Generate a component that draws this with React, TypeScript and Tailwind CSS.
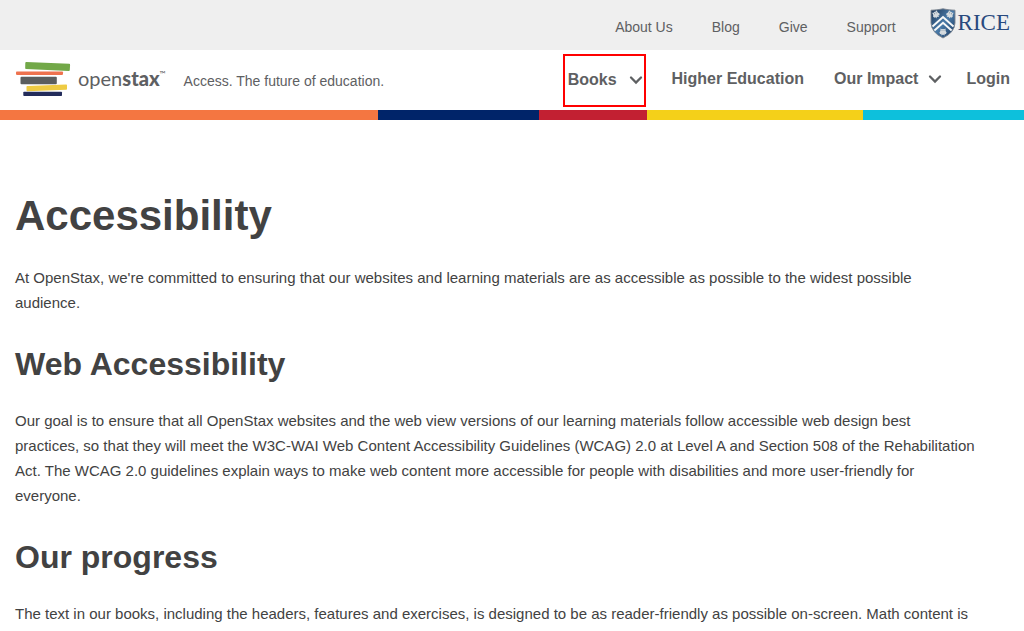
import React from "react";

const topLinks = ["About Us", "Blog", "Give", "Support"];

function Chevron() {
  return (
    <svg viewBox="0 0 14 10" className="h-[10px] w-[14px]" fill="none" stroke="currentColor" strokeWidth="2.3" strokeLinecap="round" aria-hidden="true">
      <path d="M2 2.5 L7 7.5 L12 2.5" />
    </svg>
  );
}

function BooksMark() {
  return (
    <svg viewBox="0 0 56 36" className="h-[36px] w-[56px]" aria-hidden="true">
      <path d="M10.2 0 L53.2 1.7 Q54.2 1.8 54.1 2.8 L53.8 8.1 Q53.7 9.1 52.7 9 L10 7 Q9.1 6.9 9.2 6 L9.3 0.9 Q9.4 0 10.2 0Z" fill="#72a848" />
      <rect x="0" y="9.5" width="47" height="3.4" rx="0.8" fill="#ee724e" />
      <rect x="4.5" y="14.7" width="36.3" height="7.5" rx="1" fill="#5b5e5e" />
      <path d="M11.3 24 L50.3 22.6 Q51 22.6 51 23.4 V27 Q51 27.8 50.2 27.8 L11.4 29.2 Q10.5 29.2 10.5 28.3 V24.8 Q10.5 24 11.3 24Z" fill="#eecb43" />
      <rect x="7.3" y="29.8" width="38.7" height="4.3" rx="0.8" fill="#232c5b" />
    </svg>
  );
}

function Owl({ x, y, turn }: { x: number; y: number; turn: number }) {
  return (
    <g transform={`translate(${x} ${y}) rotate(${turn})`} fill="#d5dbdf">
      <path d="M-2.5 -3.5 L-1.2 -2.8 L0 -3.1 L1.2 -2.8 L2.5 -3.5 L2.6 -1 L3.6 0.6 L2.8 2.2 L1.7 1.7 L1.6 3.5 L0.5 2.7 L-0.5 2.7 L-1.6 3.5 L-1.7 1.7 L-2.8 2.2 L-3.6 0.6 L-2.6 -1Z" />
      <circle cx="-1" cy="-1.4" r="0.45" fill="#496078" />
      <circle cx="1" cy="-1.4" r="0.45" fill="#496078" />
    </g>
  );
}

function RiceShield() {
  return (
    <svg viewBox="0 0 26 31" className="h-[31px] w-[26px]" aria-hidden="true">
      <defs>
        <linearGradient id="shield" x1="0" y1="0" x2="1" y2="1">
          <stop offset="0" stopColor="#1d3656" />
          <stop offset="0.5" stopColor="#4a7ba9" />
          <stop offset="1" stopColor="#1b365b" />
        </linearGradient>
      </defs>
      <path d="M1 2.2 Q7 2.2 13 0.8 Q19 2.2 25 2.2 V15 Q24.6 24.5 13 30 Q1.4 24.5 1 15Z" fill="url(#shield)" stroke="#7d858e" strokeWidth="0.9" />
      <path d="M2.5 18.5 L13 9 L23.5 18.5 M4.4 22.6 L13 14.8 L21.6 22.6" fill="none" stroke="#f7f8f8" strokeWidth="2" />
      <Owl x={6} y={6.6} turn={-28} />
      <Owl x={19.8} y={6.6} turn={28} />
      <Owl x={13} y={24} turn={0} />
    </svg>
  );
}

function Section({ title, children }: { title: string; children: React.ReactNode }) {
  return (
    <section className="pt-[26px]">
      <h2 className="text-[32px] leading-[46px] font-bold">{title}</h2>
      <p className="pt-[21px]">{children}</p>
    </section>
  );
}

export default function App() {
  return (
    <div className="bg-white font-['Liberation_Sans',Arial,sans-serif] text-[#424242]">
      <header className="text-[#5e6062]">
        <div className="flex h-[50px] items-center justify-end bg-[#efefef] pr-[14px]">
          <nav aria-label="Secondary" className="flex gap-[39px] pt-1 text-sm">
            {topLinks.map((label) => (
              <a key={label} href="#">{label}</a>
            ))}
          </nav>
          <a href="#" aria-label="Rice University" className="ml-[34px] flex items-center gap-[2px] pb-1">
            <RiceShield />
            <span className="font-['Liberation_Serif',serif] text-[23px] leading-7 text-[#294a7e]">RICE</span>
          </a>
        </div>

        <div className="flex h-[60px] items-center justify-between pr-[14px] pl-4">
          <div className="flex items-center">
            <a href="#" className="flex items-center gap-[6px]">
              <BooksMark />
              <span className="flex items-start pb-1 font-['Lato',sans-serif] text-[20px] leading-6">
                <span>open<b className="font-black">stax</b></span>
                <span className="text-[8px] leading-4">™</span>
              </span>
            </a>
            <span className="ml-[18px] pt-[2px] text-sm">Access. The future of education.</span>
          </div>
          <nav aria-label="Main" className="flex items-center font-bold">
            <button type="button" className="mr-[26px] flex h-[53px] items-center gap-3 border-2 border-[#ff0000] pr-[1px] pl-[3px] font-bold">
              Books
              <Chevron />
            </button>
            <a href="#" className="mr-[30px] pb-[2px]">Higher Education</a>
            <button type="button" className="mr-6 flex items-center gap-[10px] pb-[2px] font-bold">
              Our Impact
              <Chevron />
            </button>
            <a href="#" className="pb-[2px]">Login</a>
          </nav>
        </div>

        <div className="grid h-[10px] grid-cols-[378fr_161fr_108fr_216fr_161fr]">
          <span className="bg-[#f47641]" />
          <span className="bg-[#002469]" />
          <span className="bg-[#c22032]" />
          <span className="bg-[#f4d019]" />
          <span className="bg-[#0dc0dc]" />
        </div>
      </header>

      <main className="px-[15px] pt-[66px] text-[15px] leading-[25px]">
        <h1 className="text-[42px] leading-[60px] font-bold">Accessibility</h1>
        <p className="pt-[19px]">
          At OpenStax, we're committed to ensuring that our websites and learning materials are as accessible as possible to the widest possible
          <br />
          audience.
        </p>
        <Section title="Web Accessibility">
          Our goal is to ensure that all OpenStax websites and the web view versions of our learning materials follow accessible web design best
          <br />
          practices, so that they will meet the W3C-WAI Web Content Accessibility Guidelines (WCAG) 2.0 at Level A and Section 508 of the Rehabilitation
          <br />
          Act. The WCAG 2.0 guidelines explain ways to make web content more accessible for people with disabilities and more user-friendly for
          <br />
          everyone.
        </Section>
        <Section title="Our progress">
          The text in our books, including the headers, features and exercises, is designed to be as reader-friendly as possible on-screen. Math content is
        </Section>
      </main>
    </div>
  );
}
